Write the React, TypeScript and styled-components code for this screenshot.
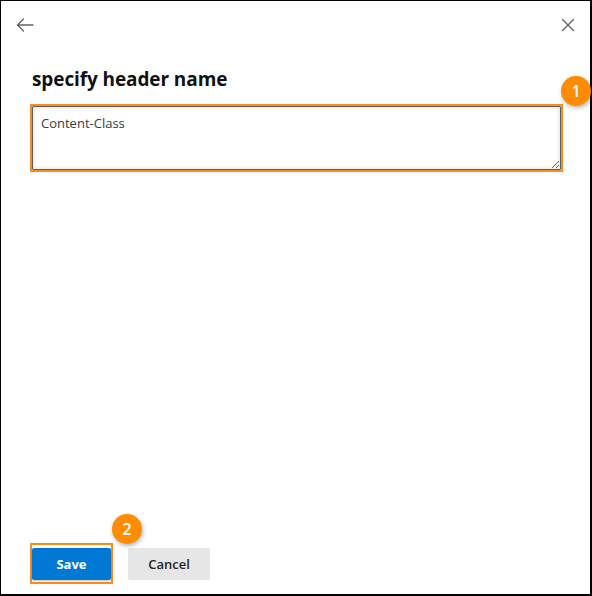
import React, { useState } from "react";
import styled, { createGlobalStyle } from "styled-components";

const GlobalStyle = createGlobalStyle`
  html, body {
    margin: 0;
    padding: 0;
    background: #ffffff;
  }
  body {
    font-family: "Open Sans", "Noto Sans", "Liberation Sans", sans-serif;
  }
`;

const Panel = styled.div`
  position: relative;
  box-sizing: border-box;
  width: 592px;
  height: 596px;
  background: #ffffff;
  border-style: solid;
  border-color: #000000;
  border-width: 1px 2px 2px 1px;
  display: flex;
  flex-direction: column;
`;

const TopBar = styled.div`
  display: flex;
  justify-content: space-between;
  align-items: center;
  padding: 13px 11px 0 13px;
  height: 22px;
`;

const IconButton = styled.button`
  display: flex;
  align-items: center;
  justify-content: center;
  width: 22px;
  height: 22px;
  padding: 0;
  border: 0;
  background: transparent;
  color: #616161;
  cursor: pointer;
`;

const Body = styled.div`
  flex: 1;
  display: flex;
  flex-direction: column;
  padding: 0 27px 0 29px;
`;

const Title = styled.h2`
  margin: 30px 0 12px 2px;
  font-size: 19px;
  line-height: 26px;
  font-weight: 700;
  color: #111111;
  letter-spacing: -0.1px;
`;

const Highlight = styled.div`
  position: relative;
  border: 2px solid #ff8c1a;
  padding: 0;
`;

const FieldArea = styled.textarea`
  display: block;
  box-sizing: border-box;
  width: 100%;
  height: 64px;
  margin: 0;
  padding: 7px 8px;
  border: 1px solid #5e5e5e;
  border-radius: 1px;
  box-shadow: inset 0 0 4px rgba(0, 0, 0, 0.18);
  font-family: "Open Sans", "Noto Sans", sans-serif;
  font-size: 13px;
  line-height: 18px;
  color: #3a3a3a;
  resize: vertical;
  outline: none;
`;

const Footer = styled.div`
  display: flex;
  align-items: center;
  gap: 15px;
  padding: 0 0 10px 29px;
`;

const SaveFrame = styled.div`
  position: relative;
  border: 2px solid #ff8c1a;
  padding: 3px 0 2px 0;
`;

const ActionButton = styled.button<{ $primary?: boolean }>`
  box-sizing: border-box;
  width: ${(p) => (p.$primary ? "79px" : "82px")};
  height: 32px;
  border: 0;
  border-radius: 2px;
  font-family: "Open Sans", "Noto Sans", sans-serif;
  font-size: 13px;
  font-weight: ${(p) => (p.$primary ? 700 : 600)};
  color: ${(p) => (p.$primary ? "#ffffff" : "#252525")};
  background: ${(p) => (p.$primary ? "#0078d4" : "#e6e6e6")};
  box-shadow: ${(p) => (p.$primary ? "0 1px 2px rgba(0,0,0,0.25)" : "none")};
  cursor: pointer;
`;

const Badge = styled.span<{ $top: number; $left: number }>`
  position: absolute;
  top: ${(p) => p.$top}px;
  left: ${(p) => p.$left}px;
  width: 30px;
  height: 30px;
  border-radius: 50%;
  background: #ff8c00;
  color: #ffffff;
  font-family: "Open Sans", "Noto Sans", sans-serif;
  font-size: 16px;
  font-weight: 600;
  display: flex;
  align-items: center;
  justify-content: center;
  box-shadow: 1px 2px 4px rgba(0, 0, 0, 0.3);
  z-index: 2;
`;

const BackArrow = () => (
  <svg width="20" height="16" viewBox="0 0 20 16" fill="none">
    <path
      d="M18 8H2.5M8.5 2L2.5 8L8.5 14"
      stroke="currentColor"
      strokeWidth="1.3"
      strokeLinecap="round"
      strokeLinejoin="round"
    />
  </svg>
);

const CloseX = () => (
  <svg width="16" height="16" viewBox="0 0 16 16" fill="none">
    <path
      d="M2.5 2.5L13.5 13.5M13.5 2.5L2.5 13.5"
      stroke="currentColor"
      strokeWidth="1.3"
      strokeLinecap="round"
    />
  </svg>
);

export default function App() {
  const [value, setValue] = useState("Content-Class");

  return (
    <>
      <GlobalStyle />
      <Panel>
        <TopBar>
          <IconButton aria-label="Back">
            <BackArrow />
          </IconButton>
          <IconButton aria-label="Close">
            <CloseX />
          </IconButton>
        </TopBar>
        <Body>
          <Title>specify header name</Title>
          <Highlight>
            <FieldArea value={value} onChange={(e) => setValue(e.target.value)} />
          </Highlight>
        </Body>
        <Footer>
          <SaveFrame>
            <ActionButton $primary>Save</ActionButton>
          </SaveFrame>
          <ActionButton>Cancel</ActionButton>
        </Footer>
        <Badge $top={75} $left={560}>1</Badge>
        <Badge $top={513} $left={111}>2</Badge>
      </Panel>
    </>
  );
}
